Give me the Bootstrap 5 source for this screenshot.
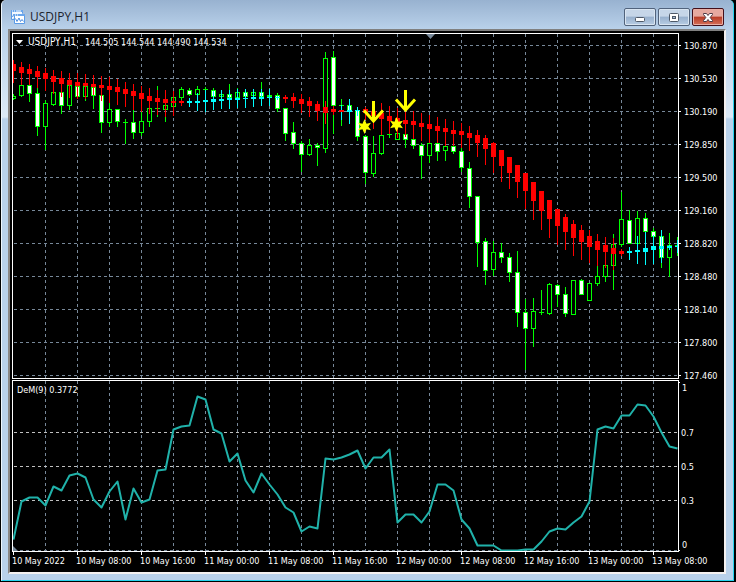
<!DOCTYPE html>
<html lang="en">
<head>
<meta charset="utf-8">
<meta name="viewport" content="width=device-width, initial-scale=1">
<title>USDJPY,H1</title>
<link href="https://cdn.jsdelivr.net/npm/bootstrap@5.3.0/dist/css/bootstrap.min.css" rel="stylesheet">
<style>
body { background: #000; font-family: "Open Sans", "Noto Sans", sans-serif; padding: 0 2px 1px 1px; }
.mdi-window {
  background: #b9d1ea;
  border: solid #27d3ee; border-width: 0 1px 1px 0; border-left: 1px solid #eef6fd;
  border-radius: 5px 5px 0 0;
}
.title-strip { background: linear-gradient(#98b2d0, #b9d1ea); height: 29px; padding: 4px 9px 0 8px; border-radius: 5px 5px 0 0; }
.title-text { font-size: 12px; line-height: 26px; color: #1c232d; }
.btn-row { gap: 2px; }
.win-btn { width: 32px; height: 18px; border: 1px solid #51637c; border-radius: 2px; padding: 0; line-height: 0;
  background: linear-gradient(#c6d6e8 0 45%, #97b0cd 50%, #b8cde4); box-shadow: inset 0 0 0 1px #d9e5f1; }
.win-btn.close-win { border-color: #43101b; background: linear-gradient(#e6a99f 0 45%, #b93c25 50%, #d4705a); box-shadow: inset 0 0 0 1px #e9aea4; }
.frame-sides { padding: 0 7px 6px 6px; background: linear-gradient(#b9d1ea, #dce9f6 88px, #b9d1ea 90px); }
.chart-pane { border: 2px solid; border-color: #808080 #f4f1f0 #f4f1f0 #8a8785; background: #000; }
.chart-pane svg { width: 100%; height: auto; }
.grid { stroke: #778899; stroke-dasharray: 3 3; }
.level { stroke: #c0c0c0; stroke-dasharray: 3 3; }
.edge { stroke: #fff; fill: none; }
.axis-text { fill: #fff; font-family: "DejaVu Sans Condensed", "Open Sans", sans-serif; font-size: 9px; }
.symbol-text { font-size: 10px; }
</style>
<script src="https://cdn.jsdelivr.net/npm/bootstrap@5.3.0/dist/js/bootstrap.bundle.min.js"></script>
</head>
<body>
<main class="mdi-window">
  <header class="title-strip d-flex align-items-start">
    <svg class="flex-shrink-0 mt-1 me-1" width="16" height="16" viewBox="0 0 16 16" aria-hidden="true">
      <path d="M1.500 11.500V2.500h11v3" fill="#f4f9ff" stroke="#5b9be6"/>
      <path d="M1 2h12v2H1z" fill="#6aa6ec"/>
      <path d="M2 3h1M4 3h1M6 3h5" stroke="#fff"/>
      <path d="M2.500 9l1.500-3" stroke="#4c8de0" fill="none"/>
      <path d="M1.500 11.500h3" stroke="#5b9be6"/>
      <path d="M4.500 6.500h10v9h-10z" fill="#fff" stroke="#5b9be6"/>
      <path d="M4 6h11v2H4z" fill="#6aa6ec"/>
      <path d="M5 7h1M7 7h1" stroke="#fff"/>
      <path d="M5.500 10.500l1.500 3 2-3.500 1.500 3.500 1.500-2 1.500 2" stroke="#4c8de0" fill="none"/>
    </svg>
    <h1 class="title-text mb-0 me-auto fw-normal">USDJPY,H1</h1>
    <div class="btn-row d-flex mt-1">
      <button type="button" class="win-btn" aria-label="Minimize">
        <svg width="12" height="12" viewBox="0 0 12 12"><rect x="1.500" y="6.500" width="9" height="4" rx="1" fill="#fff" stroke="#4e5968"/></svg>
      </button>
      <button type="button" class="win-btn" aria-label="Restore">
        <svg width="12" height="12" viewBox="0 0 12 12"><rect x="1.500" y="2.500" width="9" height="8" rx="1" fill="#fff" stroke="#4e5968"/><rect x="4.500" y="5.500" width="3" height="2" fill="#a6bcd4" stroke="#4e5968"/></svg>
      </button>
      <button type="button" class="win-btn close-win" aria-label="Close">
        <svg width="12" height="12" viewBox="0 0 12 12"><path d="M1.500 2.500h3L6 4.500 7.500 2.500h3v1L8.200 6.500l2.300 3v1h-3L6 8.500 4.500 10.500h-3v-1l2.300-3-2.300-3z" fill="#fff" stroke="#4e3a44"/></svg>
      </button>
    </div>
  </header>
  <div class="frame-sides">
    <div class="chart-pane">
      <svg id="chart" class="d-block" viewBox="10 31 714 541" role="img" aria-label="USDJPY hourly candlestick chart with DeMarker indicator">
        <defs>
          <clipPath id="plotClip"><rect x="13" y="34" width="665" height="517"/></clipPath>
        </defs>
        <g id="gridLines" shape-rendering="crispEdges"></g>
        <g id="candles" clip-path="url(#plotClip)" shape-rendering="crispEdges"></g>
        <g clip-path="url(#plotClip)"><polyline id="demLine" fill="none" stroke="#20b2aa" stroke-width="2" stroke-linejoin="round"/></g>
        <g shape-rendering="crispEdges">
          <path class="edge" d="M12 33.500H679M12.500 33V379M678.500 33V379M12 378.500H679"/>
          <path class="edge" d="M12 380.500H679M12.500 380V552M678.500 380V552M12 551.500H679M679 382.500h1M679 550.500h1"/>
          <g id="ticks"></g>
        </g>
        <path d="M426 34h9l-4.500 5z" fill="#778899"/>
        <path d="M13 546v5h5z" fill="#778899"/>
        <g id="signals">
          <path d="M373.500 101V120.500M364 110.500L373.500 121 383 110.500" fill="none" stroke="#ff0" stroke-width="3"/>
          <path d="M405.500 90V109.500M396 99.500L405.500 110 415 99.500" fill="none" stroke="#ff0" stroke-width="3"/>
          <path id="star" fill="#ff0" d="M364.500 119l2 4.700 4.500-1-2.700 3.800 2.700 3.800-4.500-1-2 4.700-2-4.700-4.500 1 2.700-3.800-2.700-3.800 4.500 1z"/>
          <use href="#star" x="32" y="-2"/>
        </g>
        <path d="M16 40h7l-3.500 4z" fill="#fff"/>
        <g id="labels" class="axis-text">
          <text class="symbol-text" x="28" y="45">USDJPY,H1</text>
          <text x="85" y="45">144.505 144.544 144.490 144.534</text>
          <text x="17" y="393">DeM(9) 0.3772</text>
        </g>
      </svg>
    </div>
  </div>
</main>
<script>
// One row per hour: wick top, body top, body bottom, wick bottom, style (h hollow, w white)
const bars = [
[94,96,99,100,'h'],[85,85,96,97,'h'],[85,85,94,102,'w'],[88,93,127,136,'w'],[100,103,127,150,'h'],[92,92,105,106,'h'],
[92,92,106,114,'w'],[85,85,106,110,'h'],[85,86,97,97,'w'],[86,86,97,101,'h'],[87,87,96,109,'w'],[94,95,123,133,'w'],
[103,109,123,127,'h'],[109,109,122,127,'w'],[119,122,122,144,'h'],[110,122,133,139,'w'],[112,121,133,136,'h'],[108,108,122,127,'h'],
[86,108,108,117,'h'],[103,105,110,122,'h'],[97,97,107,107,'h'],[87,89,98,100,'h'],[88,90,95,96,'w'],[86,89,95,95,'h'],
[87,89,90,92,'h'],[88,90,97,97,'w'],[94,94,97,97,'h'],[84,94,98,98,'w'],[88,92,98,98,'h'],[90,92,97,97,'w'],
[90,92,96,96,'h'],[82,92,97,97,'w'],[95,95,97,97,'h'],[93,95,109,112,'w'],[108,108,134,141,'w'],[122,132,144,149,'w'],
[141,143,155,172,'w'],[139,145,155,156,'h'],[143,145,148,166,'w'],[52,58,149,153,'h'],[51,57,106,134,'w'],[99,105,105,126,'h'],
[105,105,112,112,'w'],[110,110,137,141,'w'],[135,136,173,184,'w'],[136,153,174,177,'h'],[135,135,154,155,'h'],[133,134,135,138,'h'],
[133,133,140,140,'h'],[132,134,140,148,'w'],[139,139,146,149,'w'],[143,145,156,179,'w'],[143,143,156,163,'h'],[143,143,152,161,'w'],
[146,146,151,161,'h'],[146,146,152,154,'w'],[148,151,168,172,'w'],[162,168,197,208,'w'],[196,196,243,267,'w'],[238,241,271,285,'w'],
[241,252,270,276,'h'],[243,252,258,263,'w'],[253,257,273,282,'w'],[251,272,313,327,'w'],[299,312,329,370,'w'],[298,311,329,347,'h'],
[290,312,313,315,'h'],[283,284,314,315,'h'],[284,285,295,307,'w'],[287,294,314,317,'w'],[280,280,315,315,'h'],[279,280,295,295,'w'],
[283,283,301,301,'h'],[266,276,284,286,'h'],[265,265,277,282,'h'],[234,244,266,290,'h'],[192,219,245,247,'h'],[210,220,244,244,'w'],
[211,218,244,244,'h'],[213,218,232,232,'w'],[228,231,237,237,'w'],[236,236,258,268,'w'],[233,245,258,277,'h'],[237,245,246,256,'h']];

// Smoothed overlay: wick top, body top, body bottom, wick bottom
const smooth = [
[60,64,71,83],[62,67,73,85],[64,69,74,85],[66,71,77,88],[68,73,79,91],[70,76,82,94],[71,78,84,97],[73,80,85,98],[73,82,86,99],[74,83,86,99],
[75,84,87,95],[76,85,88,101],[77,86,90,103],[79,87,92,105],[82,89,94,107],[84,91,96,110],[86,93,99,112],[88,96,101,114],[90,98,102,115],[90,99,103,117],
[91,101,103,116],[100,101,103,106],[98,101,103,107],[93,101,103,111],[90,100,102,112],[91,99,102,110],[90,99,101,109],[90,98,100,109],[89,98,100,108],[89,98,99,108],
[89,97,99,107],[89,97,99,106],[89,97,98,106],[96,97,98,100],[95,97,99,103],[93,97,101,108],[94,99,104,113],[97,101,106,117],[101,104,111,121],[101,107,113,124],
[106,109,112,115],[105,110,112,120],[99,110,112,124],[107,110,111,116],[107,109,113,120],[105,111,116,129],[103,113,119,135],[106,116,121,134],[108,118,122,138],[110,120,124,137],
[111,121,125,139],[113,123,127,141],[115,124,129,143],[117,126,131,143],[119,128,132,146],[121,130,134,146],[123,131,135,148],[126,133,138,151],[130,135,143,157],[135,138,149,165],
[142,143,157,173],[150,150,166,182],[157,157,173,189],[165,165,182,198],[173,173,191,209],[182,182,201,220],[191,191,211,230],[200,200,219,238],[209,209,226,245],[214,217,232,250],
[220,224,238,256],[225,230,242,260],[230,236,247,263],[234,241,250,266],[237,245,252,268],[238,248,254,270],[249,251,254,256],[247,251,253,260],[236,250,252,264],[232,248,252,265],
[235,246,250,264],[230,246,249,263],[245,246,248,250],[240,246,247,253]];
const cyanBars = i => (i > 21 && i < 34) || (i > 41 && i < 44) || i > 76;

const dem = [539,501,497,497,505,486,490,475,473,477,499,507,491,481,519,488,502,499,470,469,429,426,425,396,399,429,433,461,453,480,492,473,484,494,507,512,531,526,528,458,459,457,454,450,468,457,457,449,522,514,514,522,511,484,484,490,519,528,545,545,545,550,550,550,549,549,541,531,528,529,522,516,501,429,426,428,415,415,404,405,416,432,446,448];

const make = (parent, tag, attrs, text) => {
  const el = document.createElementNS('http://www.w3.org/2000/svg', tag);
  for (const k in attrs) el.setAttribute(k, attrs[k]);
  if (text !== undefined) el.textContent = text;
  document.getElementById(parent).appendChild(el);
};
const box = (x, y, w, h, fill) => make('candles', 'rect', { x, y, width: w, height: h, fill });

for (let x = 45; x < 678; x += 32) {
  make('gridLines', 'path', { class: 'grid', d: `M${x + .5} 34V378M${x + .5} 381V551` });
}
['130.870', '130.530', '130.190', '129.850', '129.500', '129.160', '128.820', '128.480', '128.140', '127.800', '127.460'].forEach((price, k) => {
  const y = 45 + 33 * k;
  make('gridLines', 'path', { class: 'grid', d: `M14 ${y + .5}H678` });
  make('ticks', 'path', { class: 'edge', d: `M679 ${y + .5}h2` });
  make('labels', 'text', { x: 684, y: y + 4 }, price);
});
[432, 466, 500].forEach(y => make('gridLines', 'path', { class: 'level', d: `M14 ${y + .5}H678` }));
make('gridLines', 'path', { class: 'grid', d: 'M14 550.500H678' });
[['1', 682, 391], ['0.7', 681, 436], ['0.5', 681, 470], ['0.3', 681, 504], ['0', 682, 548]].forEach(([t, x, y]) => make('labels', 'text', { x, y }, t));
['10 May 2022', '10 May 08:00', '10 May 16:00', '11 May 00:00', '11 May 08:00', '11 May 16:00', '12 May 00:00', '12 May 08:00', '12 May 16:00', '13 May 00:00', '13 May 08:00'].forEach((t, k) => {
  make('ticks', 'path', { class: 'edge', d: `M${13.5 + 64 * k} 552v3` });
  make('labels', 'text', { x: 12 + 64 * k, y: 564 }, t);
});

bars.forEach(([a, b, c, d, s], i) => {
  const x = 13 + 8 * i;
  box(x, a, 1, d - a, '#0f0');
  box(x - 2, b, 5, Math.max(1, c - b), '#0f0');
  if (c - b > 2) box(x - 1, b + 1, 3, c - b - 2, s === 'w' ? '#fff' : '#000');
});
smooth.forEach(([a, b, c, d], i) => {
  const x = 13 + 8 * i, color = cyanBars(i) ? '#0ff' : '#f00';
  box(x, a, 1, d - a, i === 41 ? '#0ff' : color);
  box(x - 2, b, 5, c - b, color);
});
document.getElementById('demLine').setAttribute('points', dem.map((y, i) => `${13.5 + 8 * i},${y + .5}`).join(' '));
</script>
</body>
</html>
